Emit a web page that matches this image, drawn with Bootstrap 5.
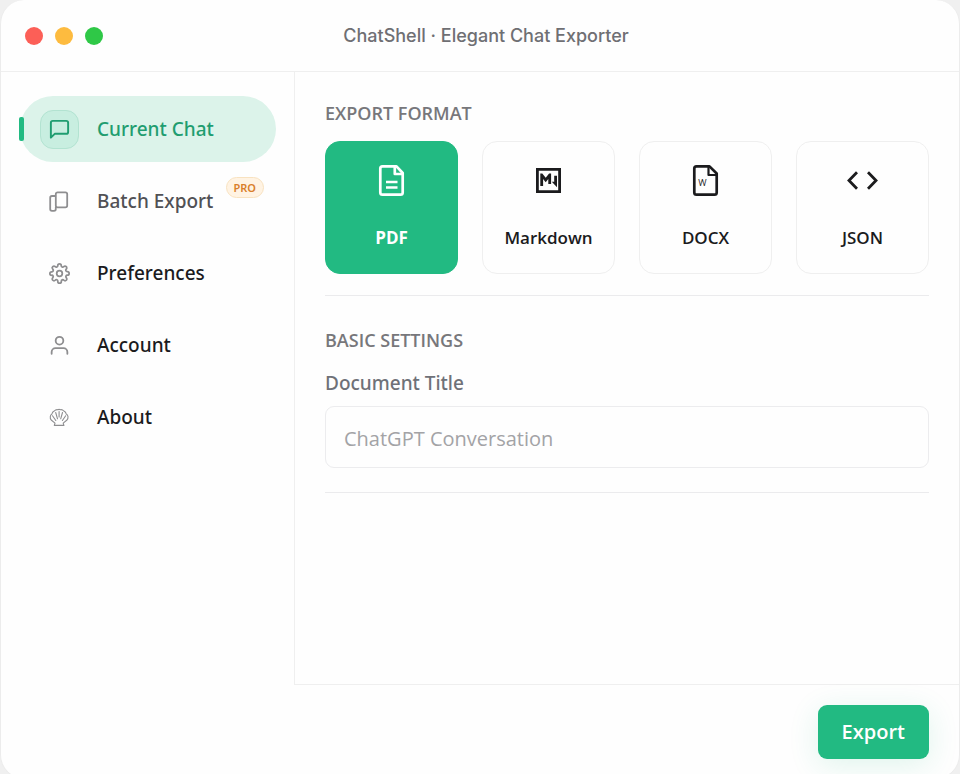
<!DOCTYPE html>
<html lang="en">
<head>
<meta charset="utf-8">
<meta name="viewport" content="width=device-width, initial-scale=1">
<title>ChatShell · Elegant Chat Exporter</title>
<link href="https://cdn.jsdelivr.net/npm/bootstrap@5.3.0/dist/css/bootstrap.min.css" rel="stylesheet">
<style>
  :root { --brand: #22ba82; --brand-ink: #1f9d70; --line: #efefef; --ink: #1b1b1d; --muted: #77777b; }
  body { background: #f0f0f0; color: var(--ink); font-family: "Open Sans", "Noto Sans", sans-serif; height: 100vh; overflow: hidden; }
  .app-window { min-height: calc(100vh + 5px); background: #fefefe; border: 1px solid #ececec; border-top: 0; border-radius: 24px; overflow: hidden; }
  .title-bar { height: 72px; border-bottom: 1px solid var(--line); padding: 0 24px; }
  .title-bar h1 { padding-left: 12px; font-family: Inter, sans-serif; font-size: 18px; font-weight: 500; line-height: 24px; color: #6f6f73; }
  .lights { flex: 1 1 0; gap: 12px; }
  .light { width: 18px; height: 18px; border-radius: 50%; border: 0; padding: 0; }
  .light-close { background: #fc5f57; }
  .light-min { background: #fdbb3f; }
  .light-max { background: #2fc847; }
  .side { width: 293px; padding: 24px 18px 24px 19px; }
  .side nav { gap: 6px; }
  .side-link, .field-label { font-family: "Noto Sans", "Open Sans", sans-serif; font-size: 19px; font-weight: 500; }
  .side-link { height: 66px; padding: 0 20px; gap: 18px; border-radius: 33px; color: var(--ink); line-height: 28px; text-decoration: none; position: relative; }
  .side-link.on { background: #dcf3ea; color: var(--brand-ink); }
  .side-link.on::before { content: ""; position: absolute; left: -1px; top: 21px; width: 5px; height: 24px; background: var(--brand); border-radius: 2px; }
  .side-link.soft { color: #515155; }
  .side-icon { width: 39px; height: 39px; border: 1px solid transparent; border-radius: 13px; color: #8e8e90; }
  .on .side-icon { background: #c8eee0; border-color: #b2e3d1; color: var(--brand-ink); }
  .pro { position: absolute; right: 12px; top: 9px; height: 21px; padding: 0 7px; border: 1px solid #f8e2c0; border-radius: 11px; background: #fff3e3; color: #d97f2b; font-size: 11px; font-weight: 600; line-height: 19px; }
  .work { border-left: 1px solid var(--line); border-bottom: 1px solid var(--line); padding: 28px 30px; }
  .caption { font-size: 18px; font-weight: 600; line-height: 26px; color: var(--muted); }
  .formats { gap: 24px; margin-top: 15px; }
  .format { flex: 1 1 0; height: 133px; padding: 0; gap: 28px; border: 1px solid #efefef; border-radius: 15px; background: #fefefe; color: var(--ink); font-size: 17px; font-weight: 600; line-height: 26px; }
  .format.on { background: var(--brand); border-color: var(--brand); color: #fff; font-weight: 700; }
  .rule { height: 1px; background: #ebebed; }
  .rule-formats { margin: 21px 0 31px; }
  .field-label { line-height: 26px; color: #6f7178; margin: 17px 0 10px; }
  .field { height: 62px; padding: 2px 18px 0; border: 1px solid #ececee; border-radius: 9px; background: #fefefe; font-size: 20px; color: var(--ink); }
  .field::placeholder { color: #a3a3a6; opacity: 1; }
  .foot { padding: 20px 30px 19px; }
  .go { height: 54px; padding: 0 24px; border: 0; border-radius: 9px; background: var(--brand); color: #fff; font-size: 20px; font-weight: 600; box-shadow: 0 6px 30px rgba(34, 186, 130, .14); }
</style>
</head>
<body>
<div class="app-window d-flex flex-column">
  <header class="title-bar d-flex align-items-center flex-shrink-0">
    <div class="lights d-flex">
      <button type="button" class="light light-close" aria-label="Close"></button>
      <button type="button" class="light light-min" aria-label="Minimize"></button>
      <button type="button" class="light light-max" aria-label="Maximize"></button>
    </div>
    <h1 class="m-0">ChatShell · Elegant Chat Exporter</h1>
    <div class="lights"></div>
  </header>

  <div class="d-flex flex-grow-1">
    <aside class="side flex-shrink-0">
      <nav class="d-flex flex-column" aria-label="Sections">
        <a href="#current" class="side-link on d-flex align-items-center" aria-current="page">
          <span class="side-icon d-flex align-items-center justify-content-center flex-shrink-0">
            <svg width="23" height="23" viewBox="0 0 24 24" fill="none" stroke="currentColor" stroke-width="2" stroke-linecap="round" stroke-linejoin="round" aria-hidden="true"><path d="M21 14.5a2 2 0 0 1-2 2H7l-4 4V5a2 2 0 0 1 2-2h14a2 2 0 0 1 2 2z"/></svg>
          </span>
          <span>Current Chat</span>
        </a>
        <a href="#batch" class="side-link soft d-flex align-items-center">
          <span class="side-icon d-flex align-items-center justify-content-center flex-shrink-0">
            <svg width="23" height="23" viewBox="0 0 23 23" fill="none" stroke="currentColor" stroke-width="1.8" stroke-linejoin="round" aria-hidden="true"><rect x="7.8" y="2.3" width="11.4" height="15" rx="1.8"/><path d="M7.8 6H4a1.8 1.8 0 0 0-1.8 1.8v11.2a1.8 1.8 0 0 0 1.8 1.8h2a1.8 1.8 0 0 0 1.8-1.8v-2"/></svg>
          </span>
          <span>Batch Export</span>
          <span class="pro">PRO</span>
        </a>
        <a href="#preferences" class="side-link d-flex align-items-center">
          <span class="side-icon d-flex align-items-center justify-content-center flex-shrink-0">
            <svg width="21" height="21" viewBox="0 0 24 24" fill="none" stroke="currentColor" stroke-width="2" stroke-linejoin="round" aria-hidden="true"><circle cx="12" cy="12" r="3.2"/><path d="M19.4 15a1.65 1.65 0 0 0 .33 1.82l.06.06a2 2 0 1 1-2.83 2.83l-.06-.06a1.65 1.65 0 0 0-2.82 1.17V21a2 2 0 0 1-4 0v-.09a1.65 1.65 0 0 0-2.9-1.26l-.06.06a2 2 0 1 1-2.83-2.83l.06-.06a1.65 1.65 0 0 0-1.17-2.82H3a2 2 0 0 1 0-4h.09a1.65 1.65 0 0 0 1.26-2.9l-.06-.06a2 2 0 1 1 2.83-2.83l.06.06a1.65 1.65 0 0 0 2.82-1.17V3a2 2 0 0 1 4 0v.09a1.65 1.65 0 0 0 2.82 1.17l.06-.06a2 2 0 1 1 2.83 2.83l-.06.06a1.65 1.65 0 0 0 1.17 2.82H21a2 2 0 0 1 0 4h-.09a1.65 1.65 0 0 0-1.51 1z"/></svg>
          </span>
          <span>Preferences</span>
        </a>
        <a href="#account" class="side-link d-flex align-items-center">
          <span class="side-icon d-flex align-items-center justify-content-center flex-shrink-0">
            <svg width="23" height="23" viewBox="0 0 24 24" fill="none" stroke="currentColor" stroke-width="1.9" stroke-linecap="round" aria-hidden="true"><circle cx="12" cy="7" r="4"/><path d="M3.8 20.6v-1.8a4 4 0 0 1 4-4h8.4a4 4 0 0 1 4 4v1.8"/></svg>
          </span>
          <span>Account</span>
        </a>
        <a href="#about" class="side-link d-flex align-items-center">
          <span class="side-icon d-flex align-items-center justify-content-center flex-shrink-0">
            <svg width="23" height="23" viewBox="0 0 23 23" fill="none" stroke="currentColor" stroke-width="1.1" stroke-linecap="round" stroke-linejoin="round" aria-hidden="true"><path d="M7 17.2 3.2 14Q2 12.5 2.3 10.5 2.6 8.8 3.9 8 4.3 5.9 6.3 5 7.7 3.4 9.7 3.7q1.300-.7 2.800 0 2-.3 3.300 1.300 2 .9 2.500 3Q19.700 8.800 20 10.500 20.200 12.500 19 14L15.200 17.200M7 17.200l-.7 2.200h9.600l-.7-2.200"/><path d="M7.800 14.500 4.500 9.800M9.500 12.800 7.700 6.500M11.100 11V5.500M12.700 12.800 14.500 6.500M14.400 14.500 17.700 9.800"/></svg>
          </span>
          <span>About</span>
        </a>
      </nav>
    </aside>

    <div class="flex-grow-1 d-flex flex-column">
      <main class="work flex-grow-1">
        <h2 class="caption m-0">EXPORT FORMAT</h2>
        <div class="formats d-flex" role="group" aria-label="Export format">
          <button type="button" class="format on d-flex flex-column align-items-center justify-content-center" aria-pressed="true">
            <svg width="33" height="33" viewBox="0 0 33 33" fill="none" stroke="currentColor" stroke-width="2.7" stroke-linejoin="round" aria-hidden="true"><path d="M21.5 2.4H7.500a2.200 2.200 0 0 0-2.200 2.200v23.800a2.200 2.200 0 0 0 2.200 2.200h18a2.200 2.200 0 0 0 2.200-2.200V9z"/><path d="M19.800 2.400V10h7.900M11 18h11.500M11 23.500h11.500"/></svg>
            <span>PDF</span>
          </button>
          <button type="button" class="format d-flex flex-column align-items-center justify-content-center" aria-pressed="false">
            <svg width="33" height="33" viewBox="0 0 33 33" fill="none" stroke="currentColor" aria-hidden="true"><path stroke-width="2.8" d="M5.400 5.400h22.200v22.200H5.400z"/><path fill="currentColor" stroke="none" d="M8.300 9.500h2l3.400 4.300 3.400-4.300h2V20h-2.800v-5l-2.600 3.300-2.600-3.300v7H8.300zM22.200 11.800h2.800v11.400l-5.200-5.400h2.400z"/></svg>
            <span>Markdown</span>
          </button>
          <button type="button" class="format d-flex flex-column align-items-center justify-content-center" aria-pressed="false">
            <svg width="33" height="33" viewBox="0 0 33 33" fill="none" stroke="currentColor" stroke-width="2.7" stroke-linejoin="round" aria-hidden="true"><path d="M20.500 2.400H7.500a2.200 2.200 0 0 0-2.200 2.200v23.800a2.200 2.200 0 0 0 2.200 2.200h18a2.200 2.200 0 0 0 2.200-2.200V9.500z"/><path stroke-width="2.2" d="M19.500 2.400V11h8.200"/><text x="13.500" y="22" text-anchor="middle" font-size="9" font-weight="400" fill="currentColor" stroke="none">W</text></svg>
            <span>DOCX</span>
          </button>
          <button type="button" class="format d-flex flex-column align-items-center justify-content-center" aria-pressed="false">
            <svg width="33" height="33" viewBox="0 0 33 33" fill="none" stroke="currentColor" stroke-width="2.8" aria-hidden="true"><path d="M11 8.300 3 16.500l8 8.200M22 8.300l8 8.200-8 8.200"/></svg>
            <span>JSON</span>
          </button>
        </div>
        <div class="rule rule-formats"></div>
        <h2 class="caption m-0">BASIC SETTINGS</h2>
        <label class="field-label d-block" for="doc-title">Document Title</label>
        <input id="doc-title" type="text" class="field w-100 d-block" placeholder="ChatGPT Conversation">
        <div class="rule mt-4"></div>
      </main>
      <footer class="foot d-flex justify-content-end">
        <button type="button" class="go">Export</button>
      </footer>
    </div>
  </div>
</div>
<script src="https://cdn.jsdelivr.net/npm/bootstrap@5.3.0/dist/js/bootstrap.bundle.min.js"></script>
</body>
</html>
